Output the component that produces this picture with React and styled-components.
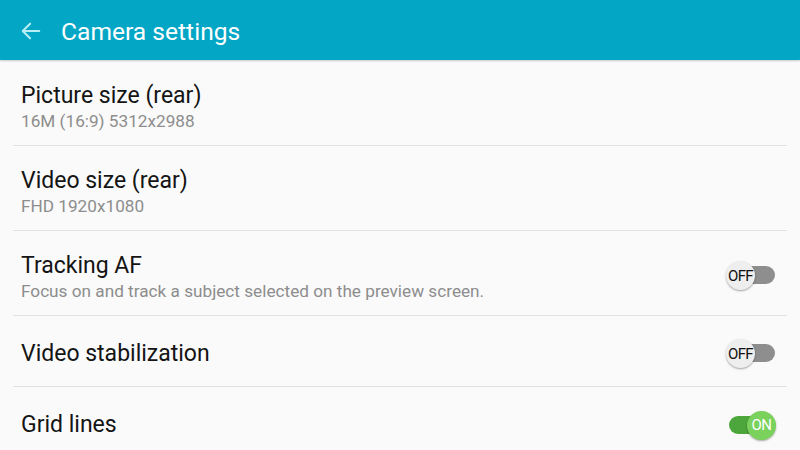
import React from "react";
import styled, { createGlobalStyle } from "styled-components";

const Global = createGlobalStyle`
  html, body {
    margin: 0;
    padding: 0;
    background: #fafafa;
    font-family: Roboto, "Noto Sans", sans-serif;
  }
  * { box-sizing: border-box; }
`;

const Page = styled.div`
  width: 800px;
  height: 450px;
  overflow: hidden;
  background: #fafafa;
`;

const Header = styled.div`
  height: 60px;
  background: #03a6c5;
  display: flex;
  align-items: center;
  padding-left: 19px;
  padding-top: 2px;
  box-shadow: 0 1px 2px rgba(0, 0, 0, 0.2);
  position: relative;
  z-index: 1;
`;

const Back = styled.div`
  width: 24px;
  height: 24px;
  display: flex;
  align-items: center;
  justify-content: center;
  margin-right: 18px;
`;

const Title = styled.h1`
  margin: 0;
  font-size: 24.6px;
  font-weight: 400;
  color: #ffffff;
`;

const List = styled.div`
  display: flex;
  flex-direction: column;
  padding: 1px 13px 0;
`;

const Row = styled.div`
  height: ${(p) => (p.tall ? "85px" : "71px")};
  flex-shrink: 0;
  display: flex;
  align-items: center;
  justify-content: space-between;
  padding: 5px 11px 0 8px;
  border-bottom: ${(p) => (p.last ? "none" : "1px solid #e1e1e1")};
`;

const Texts = styled.div`
  display: flex;
  flex-direction: column;
`;

const Label = styled.div`
  font-size: 23px;
  color: #141414;
  line-height: 30px;
`;

const Sub = styled.div`
  font-size: 17.2px;
  color: #8d8d8d;
  line-height: 20px;
`;

const Switch = styled.div`
  width: 50px;
  height: 31px;
  position: relative;
  flex-shrink: 0;
`;

const Track = styled.div`
  position: absolute;
  top: 6px;
  left: ${(p) => (p.on ? "3px" : "14px")};
  right: ${(p) => (p.on ? "6px" : "1px")};
  height: 18px;
  border-radius: 9px;
  background: ${(p) => (p.on ? "#4da63c" : "#8e8e8e")};
`;

const Thumb = styled.div`
  position: absolute;
  top: 1px;
  left: ${(p) => (p.on ? "21px" : "0")};
  width: 29px;
  height: 29px;
  border-radius: 50%;
  background: ${(p) => (p.on ? "#7ad25c" : "#eeeeee")};
  box-shadow: 0 1px 2px rgba(0, 0, 0, 0.35);
  display: flex;
  align-items: center;
  justify-content: center;
  font-size: 15px;
  letter-spacing: -0.6px;
  color: ${(p) => (p.on ? "#ffffff" : "#111111")};
`;

const Toggle = ({ on }) => (
  <Switch>
    <Track on={on} />
    <Thumb on={on}>{on ? "ON" : "OFF"}</Thumb>
  </Switch>
);

const rows = [
  { label: "Picture size (rear)", sub: "16M (16:9) 5312x2988" },
  { label: "Video size (rear)", sub: "FHD 1920x1080" },
  {
    label: "Tracking AF",
    sub: "Focus on and track a subject selected on the preview screen.",
    toggle: false,
  },
  { label: "Video stabilization", toggle: false },
  { label: "Grid lines", toggle: true },
];

export default function App() {
  return (
    <Page>
      <Global />
      <Header>
        <Back>
          <svg width="22" height="22" viewBox="0 0 24 24" fill="none">
            <path
              d="M21 12H3.5M11 4l-8 8 8 8"
              stroke="#b9eef5"
              strokeWidth="2.2"
              strokeLinecap="round"
              strokeLinejoin="round"
            />
          </svg>
        </Back>
        <Title>Camera settings</Title>
      </Header>
      <List>
        {rows.map((r, i) => (
          <Row key={r.label} tall={!!r.sub} last={i === rows.length - 1}>
            <Texts>
              <Label>{r.label}</Label>
              {r.sub && <Sub>{r.sub}</Sub>}
            </Texts>
            {r.toggle !== undefined && <Toggle on={r.toggle} />}
          </Row>
        ))}
      </List>
    </Page>
  );
}
